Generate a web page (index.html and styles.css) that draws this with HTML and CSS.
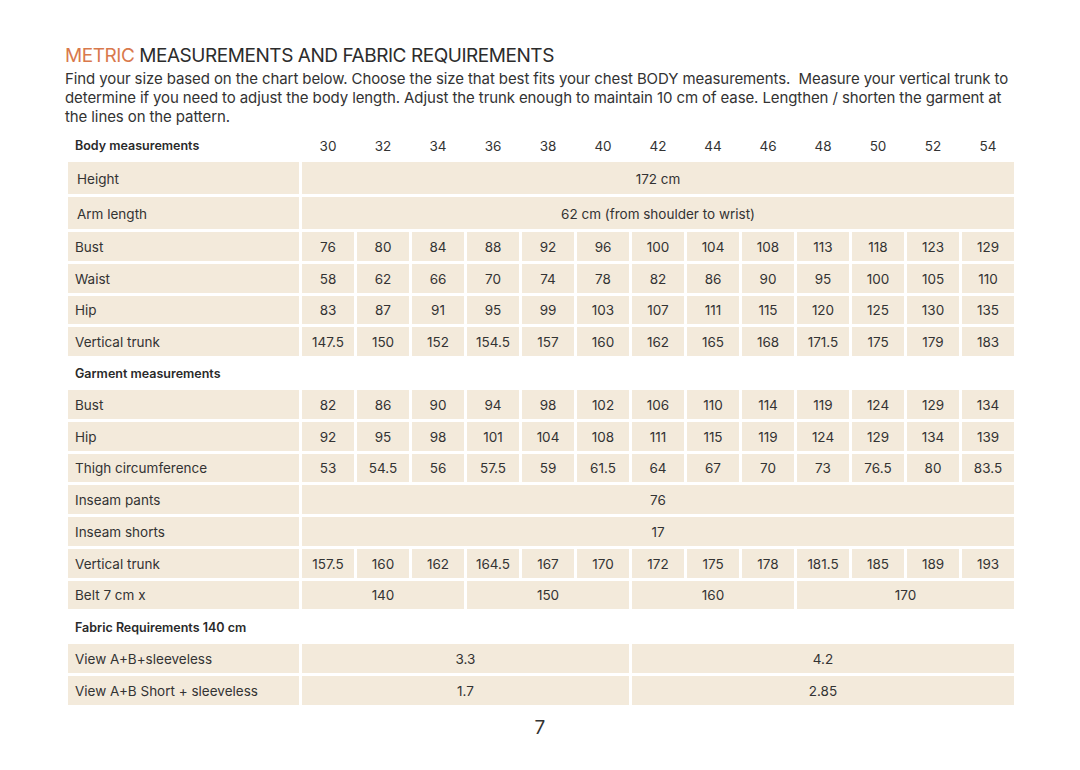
FILE: index.html
```html
<!DOCTYPE html>
<html lang="en">
<head>
<meta charset="utf-8">
<title>Metric measurements and fabric requirements</title>
<link rel="stylesheet" href="styles.css">
</head>
<body>
<main class="page">
  <h1 class="title"><span class="accent">METRIC</span> MEASUREMENTS AND FABRIC REQUIREMENTS</h1>
  <p class="intro">Find your size based on the chart below. Choose the size that best fits your chest BODY measurements.&nbsp; Measure your vertical trunk to determine if you need to adjust the body length. Adjust the trunk enough to maintain 10 cm of ease. Lengthen / shorten the garment at the lines on the pattern.</p>

  <div class="chart">
    <div class="section">Body measurements</div>
    <div class="size">30</div><div class="size">32</div><div class="size">34</div><div class="size">36</div><div class="size">38</div><div class="size">40</div><div class="size">42</div><div class="size">44</div><div class="size">46</div><div class="size">48</div><div class="size">50</div><div class="size">52</div><div class="size">54</div>

    <div class="label indent">Height</div><div class="cell span-all">172 cm</div>
    <div class="label indent">Arm length</div><div class="cell span-all">62 cm (from shoulder to wrist)</div>

    <div class="label">Bust</div><div class="cell">76</div><div class="cell">80</div><div class="cell">84</div><div class="cell">88</div><div class="cell">92</div><div class="cell">96</div><div class="cell">100</div><div class="cell">104</div><div class="cell">108</div><div class="cell">113</div><div class="cell">118</div><div class="cell">123</div><div class="cell">129</div>
    <div class="label">Waist</div><div class="cell">58</div><div class="cell">62</div><div class="cell">66</div><div class="cell">70</div><div class="cell">74</div><div class="cell">78</div><div class="cell">82</div><div class="cell">86</div><div class="cell">90</div><div class="cell">95</div><div class="cell">100</div><div class="cell">105</div><div class="cell">110</div>
    <div class="label">Hip</div><div class="cell">83</div><div class="cell">87</div><div class="cell">91</div><div class="cell">95</div><div class="cell">99</div><div class="cell">103</div><div class="cell">107</div><div class="cell">111</div><div class="cell">115</div><div class="cell">120</div><div class="cell">125</div><div class="cell">130</div><div class="cell">135</div>
    <div class="label">Vertical trunk</div><div class="cell">147.5</div><div class="cell">150</div><div class="cell">152</div><div class="cell">154.5</div><div class="cell">157</div><div class="cell">160</div><div class="cell">162</div><div class="cell">165</div><div class="cell">168</div><div class="cell">171.5</div><div class="cell">175</div><div class="cell">179</div><div class="cell">183</div>

    <div class="section full">Garment measurements</div>

    <div class="label">Bust</div><div class="cell">82</div><div class="cell">86</div><div class="cell">90</div><div class="cell">94</div><div class="cell">98</div><div class="cell">102</div><div class="cell">106</div><div class="cell">110</div><div class="cell">114</div><div class="cell">119</div><div class="cell">124</div><div class="cell">129</div><div class="cell">134</div>
    <div class="label">Hip</div><div class="cell">92</div><div class="cell">95</div><div class="cell">98</div><div class="cell">101</div><div class="cell">104</div><div class="cell">108</div><div class="cell">111</div><div class="cell">115</div><div class="cell">119</div><div class="cell">124</div><div class="cell">129</div><div class="cell">134</div><div class="cell">139</div>
    <div class="label">Thigh circumference</div><div class="cell">53</div><div class="cell">54.5</div><div class="cell">56</div><div class="cell">57.5</div><div class="cell">59</div><div class="cell">61.5</div><div class="cell">64</div><div class="cell">67</div><div class="cell">70</div><div class="cell">73</div><div class="cell">76.5</div><div class="cell">80</div><div class="cell">83.5</div>
    <div class="label">Inseam pants</div><div class="cell span-all">76</div>
    <div class="label">Inseam shorts</div><div class="cell span-all">17</div>
    <div class="label">Vertical trunk</div><div class="cell">157.5</div><div class="cell">160</div><div class="cell">162</div><div class="cell">164.5</div><div class="cell">167</div><div class="cell">170</div><div class="cell">172</div><div class="cell">175</div><div class="cell">178</div><div class="cell">181.5</div><div class="cell">185</div><div class="cell">189</div><div class="cell">193</div>
    <div class="label">Belt 7 cm x</div><div class="cell span-3">140</div><div class="cell span-3">150</div><div class="cell span-3">160</div><div class="cell span-4">170</div>

    <div class="section full">Fabric Requirements 140 cm</div>

    <div class="label">View A+B+sleeveless</div><div class="cell span-6">3.3</div><div class="cell span-7">4.2</div>
    <div class="label">View A+B Short + sleeveless</div><div class="cell span-6">1.7</div><div class="cell span-7">2.85</div>
  </div>

  <div class="folio">7</div>
</main>
</body>
</html>
```

FILE: styles.css
```css
html, body {
  margin: 0;
  padding: 0;
  background: #ffffff;
}

body {
  font-family: Inter, "Noto Sans", "Liberation Sans", sans-serif;
  color: #333333;
}

.page {
  width: 1080px;
  height: 770px;
  box-sizing: border-box;
  padding: 44px 65px 0 65px;
}

.title {
  margin: 0;
  font-size: 19px;
  line-height: 24px;
  font-weight: 400;
  color: #2c2c2c;
  letter-spacing: -0.45px;
}

.accent {
  color: #d9794c;
}

.intro {
  margin: 0;
  padding-top: 1px;
  font-size: 15px;
  line-height: 19px;
  letter-spacing: -0.1px;
  color: #333333;
}

.chart {
  margin: 5px 0 0 3px;
  display: grid;
  grid-template-columns: 231px repeat(13, 52px);
  grid-template-rows:
    28px 32px 32px repeat(4, 28.75px)
    28px repeat(7, 28.75px)
    28.5px 29px 29px;
  gap: 3px;
  font-size: 13.5px;
}

.chart > div {
  display: flex;
  align-items: center;
  padding-top: 1px;
  box-sizing: border-box;
}

.section {
  font-weight: 600;
  font-size: 12.5px;
  padding-left: 7px;
  color: #2a2a2a;
}

.section.full {
  grid-column: 1 / -1;
}

.size {
  justify-content: center;
}

.label {
  background: #f3eadb;
  padding-left: 7px;
}

.label.indent {
  padding-left: 9px;
}

.cell {
  background: #f3eadb;
  justify-content: center;
}

.span-all { grid-column: span 13; }
.span-3 { grid-column: span 3; }
.span-4 { grid-column: span 4; }
.span-6 { grid-column: span 6; }
.span-7 { grid-column: span 7; }

.folio {
  margin-top: 11px;
  text-align: center;
  font-size: 19px;
  line-height: 24px;
  color: #333333;
}
```
